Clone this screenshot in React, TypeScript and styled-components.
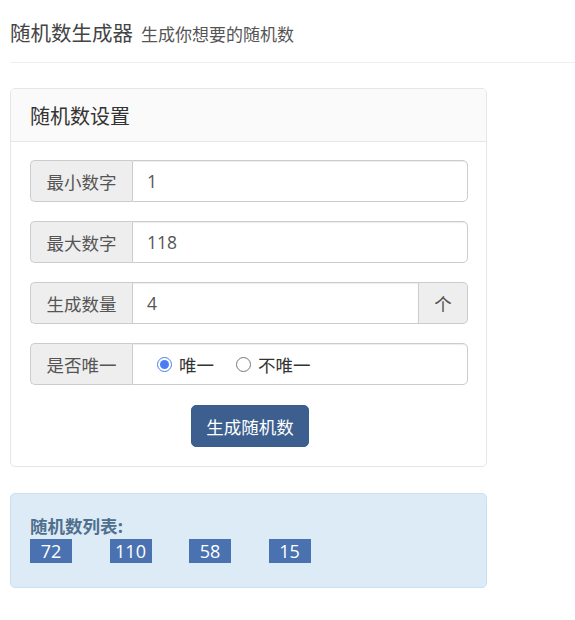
import React from "react";
import styled, { createGlobalStyle } from "styled-components";

const Global = createGlobalStyle`
  * { box-sizing: border-box; }
  html, body { margin: 0; padding: 0; background: #fff; }
  body {
    font-family: "Open Sans", "Noto Sans CJK SC", sans-serif;
    font-size: 17.5px;
    color: #333;
  }
`;

const Page = styled.div`
  padding: 0 0 0 10px;
`;

const Header = styled.div`
  padding: 20px 0 16px 0;
  border-bottom: 1px solid #eee;
  margin-bottom: 25px;
`;

const Title = styled.h4`
  margin: 0;
  display: flex;
  align-items: baseline;
  font-size: 20.5px;
  line-height: 25px;
  font-weight: 400;
  color: #444;
  font-family: "Noto Sans CJK SC", sans-serif;
`;

const Sub = styled.small`
  font-size: 17px;
  color: #555;
  margin-left: 8px;
  font-weight: 400;
`;

const Panel = styled.div`
  width: 477px;
  border: 1px solid #e6e6e6;
  border-radius: 5px;
  background: #fff;
  overflow: hidden;
`;

const PanelHeading = styled.div`
  height: 53px;
  display: flex;
  align-items: center;
  padding: 0 19px;
  background: #fafafa;
  border-bottom: 1px solid #e6e6e6;
`;

const PanelTitle = styled.h3`
  margin: 0;
  font-size: 20px;
  font-weight: 400;
  color: #333;
  font-family: "Noto Sans CJK SC", sans-serif;
`;

const PanelBody = styled.div`
  padding: 18px 18px 19px 19px;
  display: flex;
  flex-direction: column;
  gap: 19px;
`;

const Group = styled.div`
  display: flex;
  height: 42px;
`;

const Addon = styled.span<{ $side: "left" | "right"; $w: number }>`
  flex: 0 0 ${(p) => p.$w}px;
  display: flex;
  align-items: center;
  justify-content: center;
  background: #eee;
  border: 1px solid #ccc;
  color: #555;
  font-size: 17.5px;
  font-family: "Noto Sans CJK SC", sans-serif;
  border-radius: ${(p) => (p.$side === "left" ? "5px 0 0 5px" : "0 5px 5px 0")};
  ${(p) => (p.$side === "left" ? "border-right: 0;" : "border-left: 0;")}
`;

const Field = styled.input<{ $end: boolean }>`
  flex: 1;
  min-width: 0;
  height: 42px;
  border: 1px solid #ccc;
  border-radius: ${(p) => (p.$end ? "0 5px 5px 0" : "0")};
  padding: 0 14px;
  font-size: 17.5px;
  color: #555;
  font-family: "Open Sans", "Noto Sans CJK SC", sans-serif;
  outline: none;
  background: #fff;
  box-shadow: inset 0 1px 1px rgba(0, 0, 0, 0.075);
`;

const RadioBox = styled.div`
  flex: 1;
  display: flex;
  align-items: center;
  border: 1px solid #ccc;
  border-radius: 0 5px 5px 0;
  padding: 0 0 0 24px;
  box-shadow: inset 0 1px 1px rgba(0, 0, 0, 0.075);
`;

const RadioLabel = styled.label`
  display: flex;
  align-items: center;
  gap: 7px;
  margin-right: 22px;
  font-size: 17.5px;
  color: #333;
  font-family: "Noto Sans CJK SC", sans-serif;
`;

const Radio = styled.input`
  width: 15px;
  height: 15px;
  margin: 0;
  accent-color: #4a7cf3;
`;

const ButtonRow = styled.div`
  display: flex;
  justify-content: center;
  padding-top: 1px;
`;

const Button = styled.button`
  height: 42px;
  width: 118px;
  margin-left: 2px;
  border: 1px solid #3a5d8c;
  border-radius: 5px;
  background: #3c5f8f;
  color: #fff;
  font-size: 17.5px;
  font-family: "Noto Sans CJK SC", sans-serif;
`;

const Alert = styled.div`
  margin-top: 26px;
  width: 477px;
  height: 95px;
  border: 1px solid #c8e0f0;
  border-radius: 5px;
  background: #ddebf6;
  padding: 20px 19px 0 19px;
`;

const ListLabel = styled.div`
  font-weight: 700;
  font-size: 17.5px;
  line-height: 24px;
  color: #4f6f8e;
  font-family: "Noto Sans CJK SC", sans-serif;
`;

const Badges = styled.div`
  display: flex;
  gap: 37.5px;
  margin-top: 1px;
`;

const Badge = styled.span`
  width: 42px;
  height: 24px;
  display: flex;
  align-items: center;
  justify-content: center;
  background: #4a72b0;
  color: #fff;
  font-size: 18px;
  font-family: "Open Sans", sans-serif;
`;

export default function App() {
  const nums = [72, 110, 58, 15];
  return (
    <Page>
      <Global />
      <Header>
        <Title>
          随机数生成器<Sub>生成你想要的随机数</Sub>
        </Title>
      </Header>
      <Panel>
        <PanelHeading>
          <PanelTitle>随机数设置</PanelTitle>
        </PanelHeading>
        <PanelBody>
          <Group>
            <Addon $side="left" $w={102}>最小数字</Addon>
            <Field $end defaultValue="1" />
          </Group>
          <Group>
            <Addon $side="left" $w={102}>最大数字</Addon>
            <Field $end defaultValue="118" />
          </Group>
          <Group>
            <Addon $side="left" $w={102}>生成数量</Addon>
            <Field $end={false} defaultValue="4" />
            <Addon $side="right" $w={49}>个</Addon>
          </Group>
          <Group>
            <Addon $side="left" $w={102}>是否唯一</Addon>
            <RadioBox>
              <RadioLabel>
                <Radio type="radio" name="uniq" defaultChecked />
                唯一
              </RadioLabel>
              <RadioLabel>
                <Radio type="radio" name="uniq" />
                不唯一
              </RadioLabel>
            </RadioBox>
          </Group>
          <ButtonRow>
            <Button>生成随机数</Button>
          </ButtonRow>
        </PanelBody>
      </Panel>
      <Alert>
        <ListLabel>随机数列表:</ListLabel>
        <Badges>
          {nums.map((n) => (
            <Badge key={n}>{n}</Badge>
          ))}
        </Badges>
      </Alert>
    </Page>
  );
}
